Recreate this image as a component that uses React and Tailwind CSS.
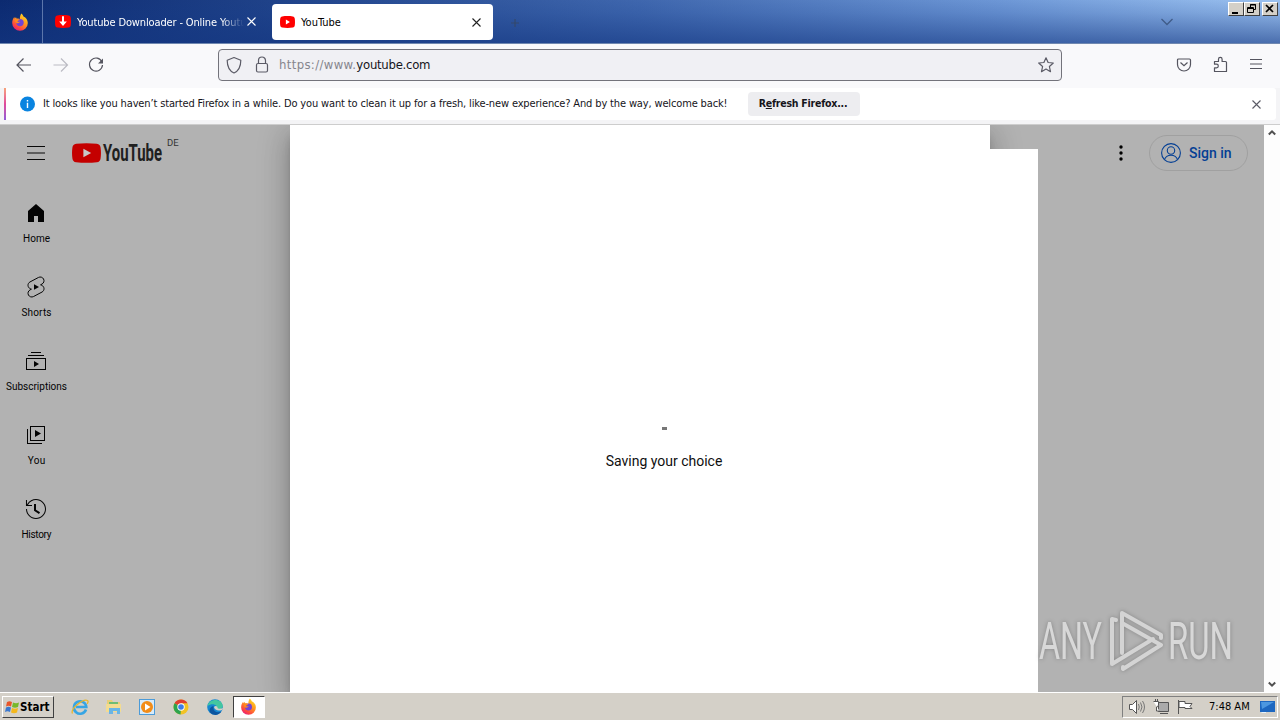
"use client";

const tahoma = "font-['DejaVu_Sans_Condensed','DejaVu_Sans',sans-serif] [font-stretch:75%]";

const sideItems = [
  { label: "Home", w: 27, icon: <path d="M4 10v11h6v-6h4v6h6V10l-8-7z" fill="#030303" /> },
  {
    label: "Shorts",
    w: 30,
    icon: (
      <>
        <path d="M10 14.65v-5.3L15 12z" fill="#030303" />
        <path
          d="M17.77 10.32l-1.2-.5L18 9.06c1.84-.96 2.53-3.23 1.56-5.06s-3.24-2.53-5.07-1.56L6 6.94c-1.29.68-2.07 2.04-2 3.49.07 1.42.93 2.67 2.22 3.25l1.2.5L6 14.93c-1.83.97-2.53 3.24-1.56 5.07.97 1.83 3.24 2.53 5.07 1.56l8.5-4.5c1.29-.68 2.06-2.04 1.99-3.49-.07-1.42-.94-2.68-2.23-3.25z"
          fill="none" stroke="#030303" strokeWidth="1"
        />
      </>
    ),
  },
  {
    label: "Subscriptions",
    w: 61,
    icon: <path d="M10 18v-6l5 3-5 3zm7-15H7v1h10V3zm3 3H4v1h16V6zm2 3H2v12h20V9zM3 10h18v10H3V10z" fill="#030303" />,
  },
  {
    label: "You",
    w: 17.5,
    icon: <path d="m11 7 6 3.500-6 3.500V7zm7 13H4V6H3v15h15v-1zm3-2H6V3h15v15zM7 17h13V4H7v13z" fill="#030303" />,
  },
  {
    label: "History",
    w: 30,
    icon: (
      <path
        d="M14.970 16.950 10 13.870V7h2v5.760l4.030 2.490-1.060 1.700zM22 12c0 5.510-4.490 10-10 10S2 17.510 2 12h1c0 4.960 4.040 9 9 9s9-4.040 9-9-4.040-9-9-9C8.810 3 5.920 4.640 4.280 7.380c-.11.180-.22.370-.31.560L3.940 8H8v1H1.960V3h1v4.740c.040-.090.070-.170.110-.250.110-.220.230-.420.350-.630C5.220 3.860 8.510 2 12 2c5.510 0 10 4.490 10 10z"
        fill="#030303"
      />
    ),
  },
];

function Firefox({ size = 18 }) {
  return (
    <svg width={size} height={size} viewBox="0 0 18 18">
      <defs>
        <linearGradient id="ffx" x1="0.8" y1="0" x2="0.2" y2="1">
          <stop offset="0" stopColor="#ffe226" />
          <stop offset="0.4" stopColor="#ff9a1f" />
          <stop offset="0.75" stopColor="#ff4a3c" />
          <stop offset="1" stopColor="#e31587" />
        </linearGradient>
      </defs>
      <path d="M10.500.5c1 1 1.700 2 2 3 2.500 1.200 4.300 3.500 4.300 6.500a7.800 7.800 0 0 1-15.600 0c0-2.400.8-4.500 2.100-6l.4 1.500 1.300-1.200.8 1.400c1.600-.4 2.500.1 3 .6.100-2.500.5-4.500 1.700-5.800z" fill="url(#ffx)" />
      <circle cx="9" cy="9.600" r="3.700" fill="#7044d6" />
      <path d="M4 6.500c2-1 3.500-.7 5 .5-1.200.2-2.300.8-2.500 1.800 1 .2 1.800 0 2.600-.2-.6 1.600-2.300 2-3.600 1.500-1-.6-1.600-2-1.500-3.600z" fill="#ff8a1e" />
    </svg>
  );
}

function YtBadge({ w, h, color = "#f00", arrow }) {
  return (
    <svg width={w} height={h} viewBox="0 0 28 20" preserveAspectRatio="none">
      <path d="M4 .7C10 0 18 0 24 .7c2.200.3 3.300 1.600 3.600 3.800.5 3.500.5 7.500 0 11-.3 2.200-1.400 3.500-3.600 3.800-6 .7-14 .7-20 0C1.800 19 .7 17.700.4 15.500c-.5-3.500-.5-7.500 0-11C.7 2.300 1.800 1 4 .7z" fill={color} />
      {arrow ? (
        <path d="M12.300 2h3.400v8h5L14 17 7.300 10h5z" fill="#fff" />
      ) : (
        <path d="M11 5.700v8.600l7.500-4.300z" fill={color === "#f00" ? "#fff" : "#c8c8c8"} />
      )}
    </svg>
  );
}

function Cross({ size = 9, color = "#333", className = "" }) {
  return (
    <svg width={size} height={size} viewBox="0 0 9 9" className={className}>
      <path d="M.5.5l8 8M8.500.5l-8 8" stroke={color} strokeWidth="1.100" fill="none" />
    </svg>
  );
}

function TitleBar() {
  return (
    <header className="relative flex h-11 shrink-0 border-b border-[#7088b0] bg-[linear-gradient(90deg,#0c2a70_0%,#20438a_22%,#3f67ae_50%,#6d97d6_78%,#9cc2f0_100%)]">
      <div className="absolute inset-0 bg-[linear-gradient(180deg,rgba(20,60,140,0)_0%,rgba(20,60,140,0.15)_30%,rgba(20,55,130,0.6)_100%)]" />
      <div className="relative flex w-[43px] items-center justify-center border-r border-[#5c76ab] pr-[2px]">
        <Firefox />
      </div>
      <div className="relative flex w-[225px] items-center pl-3">
        <YtBadge w={16} h={13} arrow />
        <div className={`${tahoma} mt-[3px] ml-[6px] w-[167px] overflow-hidden whitespace-nowrap text-[11px] text-white tracking-[-0.14px] [mask-image:linear-gradient(90deg,#000_86%,transparent)]`}>
          Youtube Downloader - Online Youtu
        </div>
        <Cross color="#fff" className="ml-[3px]" />
      </div>
      <div className="relative mt-1 ml-1 flex h-9 w-[221px] items-center rounded-[4px] bg-white pl-2">
        <YtBadge w={15} h={12} />
        <span className={`${tahoma} mt-[2px] ml-[6px] flex-1 text-[11px] text-black`}>YouTube</span>
        <Cross color="#222" className="mr-[12px]" />
      </div>
      <svg className="relative mt-[18px] ml-[17px]" width="10" height="10">
        <path d="M5 1v8M1 5h8" stroke="#34496c" strokeWidth="1.200" />
      </svg>
      <svg className="relative mt-[18px] ml-auto mr-[107px]" width="12" height="8">
        <path d="M.5 1l5.500 5.500L11.500 1" fill="none" stroke="#405c88" strokeWidth="1.300" />
      </svg>
      <WindowButtons />
    </header>
  );
}

function WindowButtons() {
  const btn = "h-[14px] w-4 border border-t-white border-l-white border-r-[#404040] border-b-[#404040] bg-[#d4d0c8]";
  return (
    <div className="absolute top-[2px] right-[2px] flex">
      <div className={btn}>
        <svg width="14" height="12"><path d="M3 9h6v2H3z" /></svg>
      </div>
      <div className={btn}>
        <svg width="14" height="12" fill="none" stroke="#000">
          <path d="M5.500 4V1.500h5v5H9M5 2h6M2.500 4.500h6v5h-6zM2 5.500h7" />
        </svg>
      </div>
      <div className={`${btn} ml-[2px]`}>
        <svg width="14" height="12"><path d="M3 2l7 7M10 2l-7 7" stroke="#000" strokeWidth="1.700" /></svg>
      </div>
    </div>
  );
}

function NavBar() {
  return (
    <nav className="flex h-11 shrink-0 items-center bg-[#f9f9fb] pb-[2px]">
      <svg width="218" height="42" fill="none" stroke="#55555f" strokeWidth="1.200">
        <path d="M31 21H17.500M23.500 14.500L17 21l6.500 6.500" />
        <path d="M53.500 21H67M61 14.500l6.500 6.500-6.500 6.500" stroke="#bbbbc3" />
        <path d="M102 18a6.500 6.500 0 1 0 .5 3" />
        <path d="M98 19.500h5v-5z" fill="#55555f" stroke="none" />
      </svg>
      <div className="flex h-8 w-[844px] items-center rounded-[4px] border border-[#73737b] bg-[#f0f0f4]">
        <svg width="60" height="30" fill="none" stroke="#5b5b66" strokeWidth="1.200">
          <path d="M15 7.500l6.800 2.700c0 6-1.800 10.500-6.800 12.800-5-2.300-6.800-6.800-6.800-12.800z" strokeLinejoin="round" />
          <rect x="37.500" y="13.500" width="11" height="8.500" rx="1.500" />
          <path d="M39.500 13.500v-3a3.500 3.500 0 0 1 7 0v3" />
        </svg>
        <span className={`${tahoma} text-[13px] tracking-[0.35px] text-[#85858d]`}>
          https://www.<span className="tracking-[-0.27px] text-[#15141a]">youtube.com</span>
        </span>
        <svg className="ml-auto mr-[7px]" width="16" height="16" viewBox="0 0 16 16" fill="none" stroke="#5b5b66" strokeWidth="1.200" strokeLinejoin="round">
          <path d="M8 .8l2.100 4.700 5.200.5-3.900 3.500 1.100 5.200L8 12.100l-4.500 2.600 1.100-5.200L.7 6l5.200-.5z" />
        </svg>
      </div>
      <svg className="ml-auto mr-[17px]" width="87" height="20" fill="none" stroke="#55555f" strokeWidth="1.200">
        <path d="M2.500 4h11a1 1 0 0 1 1 1v4.500a6.500 6.500 0 0 1-13 0V5a1 1 0 0 1 1-1z" />
        <path d="M4.500 7.500L8 10.800l3.500-3.300" />
        <path d="M38.500 6.500h4V4.200a1.800 1.800 0 0 1 3.600 0v2.300h3.400a1 1 0 0 1 1 1v9h-12v-3.700h2a1.800 1.800 0 0 0 0-3.600h-2z" strokeLinejoin="round" />
        <path d="M74 4.500h12M74 9h12M74 13.500h12" />
      </svg>
    </nav>
  );
}

function Notification() {
  return (
    <div className="flex h-[37px] shrink-0 flex-col border-b border-[#cdcdcd] bg-[#f4f4f6] pr-1 pl-1">
      <div className="flex h-8 items-center rounded-[3px] bg-white">
        <div className="h-full w-[2px] bg-gradient-to-b from-[#f7a37a] via-[#e0489a] to-[#9059d8]" />
        <svg className="ml-[14px]" width="16" height="16">
          <circle cx="7.500" cy="8" r="7.500" fill="#0a84e0" />
          <path d="M6.800 4h1.400v1.400H6.800zM6.800 6.800h1.400V12H6.800z" fill="#fff" />
        </svg>
        <span className={`${tahoma} ml-[7px] w-[705px] whitespace-nowrap text-[11px] tracking-[-0.146px] text-[#15141a]`}>
          It looks like you haven’t started Firefox in a while. Do you want to clean it up for a fresh, like-new experience? And by the way, welcome back!
        </span>
        <button className={`${tahoma} h-6 w-28 whitespace-nowrap rounded-[4px] bg-[#ededf0] pr-[2px] text-[10.500px] font-bold tracking-[-0.23px] text-[#15141a]`}>
          R<u>e</u>fresh Firefox...
        </button>
        <Cross color="#5b5b66" className="ml-auto mr-[15px]" />
      </div>
    </div>
  );
}

function YouTubePage() {
  return (
    <main className="relative flex h-[567px] shrink-0 overflow-hidden bg-[#b2b2b2]">
      <aside className="flex w-[290px] flex-col">
        <div className="flex h-14 items-center pl-[27px]">
          <svg width="18" height="14"><path d="M0 .5h18M0 7h18M0 13.500h18" stroke="#080808" strokeWidth="1.100" /></svg>
          <div className="ml-[27px]"><YtBadge w={29} h={20} color="#c40000" /></div>
          <svg className="ml-[2px] overflow-visible" width="60" height="26">
            <text x="0" y="21" textLength="59" lengthAdjust="spacingAndGlyphs" fontFamily="Roboto, sans-serif" fontWeight="700" fontSize="23" fill="#202020">YouTube</text>
          </svg>
          <span className="mb-[20px] ml-[4px] font-[Roboto,sans-serif] text-[9.500px] leading-none text-[#333]">DE</span>
        </div>
        <div className="mt-1 flex w-[72px] flex-col">
          {sideItems.map((item) => (
            <div key={item.label} className="flex h-[74px] flex-col items-center pt-4">
              <svg width="24" height="24" viewBox="0 0 24 24">{item.icon}</svg>
              <svg className="mt-[6px]" width="72" height="14">
                <text x={36.500 - item.w / 2} y="11" textLength={item.w} fontFamily="Roboto, sans-serif" fontSize="10" fill="#030303">{item.label}</text>
              </svg>
            </div>
          ))}
        </div>
      </aside>

      <div className="h-full w-[700px] bg-white shadow-[0_16px_24px_2px_rgba(0,0,0,0.14),0_6px_30px_5px_rgba(0,0,0,0.12),0_8px_10px_-5px_rgba(0,0,0,0.4)]" />
      {/* consent overlay is wider than the dialog below it */}
      <div className="absolute top-6 left-[290px] flex h-[543px] w-[748px] flex-col items-center bg-white">
        <div className="mt-[278px] h-[3px] w-[5px] bg-[#777]" />
        <p className="mt-[21px] font-[Roboto,sans-serif] text-[14px] text-[#0f0f0f]">Saving your choice</p>
      </div>

      <div className="ml-auto flex h-14 items-center">
        <svg width="4" height="16"><circle cx="2" cy="2" r="1.700" /><circle cx="2" cy="8" r="1.700" /><circle cx="2" cy="14" r="1.700" /></svg>
        <div className="ml-[26px] mr-4 flex h-9 w-[99px] items-center rounded-full border border-[#a0a0a0] pl-[11px]">
          <svg width="20" height="20" fill="none" stroke="#043f94" strokeWidth="1.100">
            <circle cx="10" cy="10" r="9.400" />
            <circle cx="10" cy="7.500" r="3.700" />
            <path d="M3.500 16.500c1-3 3.500-4.300 6.500-4.300s5.500 1.300 6.500 4.300" />
          </svg>
          <span className="ml-2 font-[Roboto,sans-serif] text-[14px] font-medium text-[#043f94]">Sign in</span>
        </div>
      </div>
      <div className="flex w-4 flex-col items-center justify-between bg-[#fdfdfd] py-[4px]">
        <svg width="8" height="7"><path d="M.8 5.500L4 2.300l3.200 3.200" fill="none" stroke="#505050" strokeWidth="2" /></svg>
        <svg width="8" height="7"><path d="M.8 1.500L4 4.700l3.200-3.200" fill="none" stroke="#505050" strokeWidth="2" /></svg>
      </div>

      <Watermark />
    </main>
  );
}

function Watermark() {
  return (
    <svg className="absolute top-[480px] left-[1036px] overflow-visible drop-shadow-[0_0_2px_rgba(0,0,0,0.25)]" width="200" height="72" fill="#d8d8d8">
      <g fontFamily="Roboto, sans-serif" fontSize="51" fontWeight="400">
        <text x="3" y="54" textLength="63" lengthAdjust="spacingAndGlyphs">ANY</text>
        <text x="132" y="54" textLength="65" lengthAdjust="spacingAndGlyphs">RUN</text>
      </g>
      <g fill="none" stroke="#d4d4d4" strokeWidth="4" strokeLinejoin="round" strokeLinecap="round">
        <path d="M86 48V8l39 22v3M86 18l39 22-38 24v-2" />
        <path d="M80 15l-4-1v45l41-25" />
      </g>
    </svg>
  );
}

function Taskbar() {
  return (
    <footer className="flex h-7 shrink-0 items-center border-t border-white bg-[#d4d0c8] pl-[2px]">
      <div className={`${tahoma} flex h-[22px] w-[52px] items-center border border-t-white border-l-white border-r-[#404040] border-b-[#404040] pl-px text-[11.500px] font-bold text-black`}>
        <svg width="16" height="16">
          <path d="M3 3c2-1 3-1 5 0L7 7.500c-2-1-3-1-5 0z" fill="#e8562a" />
          <path d="M9 3.500c2 1 4 1 6 0l-1 4.500c-2 1-4 1-6 0z" fill="#77b82a" />
          <path d="M2 8.500c2-1 3-1 5 0L6 13c-2-1-3-1-5 0z" fill="#3a78cf" />
          <path d="M8 9c2 1 4 1 6 0l-1 4.500c-2 1-4 1-6 0z" fill="#f4b81c" />
        </svg>
        <span className="mt-[2px]">Start</span>
      </div>
      <div className="ml-[17px] flex items-center gap-[15.700px]">
        <svg width="18" height="18" fill="none">
          <path d="M15 11.500a6.200 6.200 0 1 1 .3-2.500H5" stroke="#36a5e4" strokeWidth="2.600" />
          <path d="M1.500 15.500C-1 11 12 .5 16.500 2.500c1 .6.500 2-.3 3.300" stroke="#e9b62c" strokeWidth="1.300" />
        </svg>
        <svg width="18" height="18">
          <path d="M2 2h5l1 2h7v5H2z" fill="#e8cf78" /><path d="M4 4h9v4H4z" fill="#6fbd72" />
          <path d="M1 6h15v8H1z" fill="#f3dc90" /><path d="M4 10h11v6h-3v-3H8v3H4z" fill="#69b5e5" />
        </svg>
        <svg width="18" height="18">
          <rect x="1.500" y="1.500" width="15" height="15" fill="#d7ebfa" stroke="#4c9bd8" />
          <circle cx="9" cy="9" r="6" fill="#f28c18" /><path d="M7 5.500v7L12.500 9z" fill="#fff" />
        </svg>
        <svg width="18" height="18">
          <circle cx="9" cy="9" r="7.500" fill="#f2c325" />
          <path d="M9 9L2.500 5.250A7.500 7.500 0 0 1 15.500 5.250H9z" fill="#df3f32" />
          <path d="M9 9L2.500 5.250A7.500 7.500 0 0 0 8.500 16.500z" fill="#2da44e" />
          <circle cx="9" cy="9" r="3.700" fill="#fff" /><circle cx="9" cy="9" r="2.800" fill="#3e7de8" />
        </svg>
        <svg width="18" height="18">
          <circle cx="9" cy="9" r="7.800" fill="#1687d0" />
          <path d="M1.500 8C3 0 16 0 16.800 8c0 3-4 4-6 2.500 1.500-3-4-6.500-9.300-2.500z" fill="#43c6a0" />
          <path d="M7.500 8c-1 5 3 7.500 8 5.500-4 6-12 3-12-1 0-2.500 2-4 4-4.500z" fill="#0c559f" />
          <path d="M8 9c.5 3 4 4.500 8 3l1-2c-2 1-5 1-5.500 0 .5-2-2.500-3-3.500-1z" fill="#d4d0c8" />
        </svg>
      </div>
      <div className="ml-[9px] flex h-[22px] w-8 items-center justify-center border border-t-[#404040] border-l-[#404040] border-r-white border-b-white bg-white">
        <Firefox size={17} />
      </div>
      <div className="ml-auto mr-[2px] flex h-[22px] w-[156px] items-center border border-t-[#808080] border-l-[#808080] border-r-white border-b-white">
        <svg width="82" height="20" fill="#fff" stroke="#555">
          <path d="M6.500 7.500h3l4-4v13l-4-4h-3z" />
          <path d="M15.500 7q1.500 3 0 6M17.500 5.500q3 4.500 0 9M19.500 4q4 6 0 12" fill="none" stroke="#777" />
          <path d="M35.500 5.500h10v9h-10zM37 16.500h8" fill="#aaa" />
          <path d="M30.500 4.500h5v4l-2 1.500v4h3M32.500 2v2M34.500 2v2" />
          <path d="M55.500 3v14M56 4.500h6v2h7l-2 3 2 2h-7v-1h-6z" />
        </svg>
        <span className={`${tahoma} mt-[2px] ml-[4px] whitespace-nowrap text-[11px] text-black`}>7:48 AM</span>
        <svg className="ml-auto mr-px" width="16" height="16">
          <path d="M0 2h15v11H0z" fill="#1d67c0" /><path d="M1 3h13L2 10z" fill="#4c97e0" />
          <path d="M2 13h4v1H1z" fill="#e8f3fb" />
        </svg>
      </div>
    </footer>
  );
}

export default function App() {
  return (
    <div className="flex h-[720px] w-[1280px] flex-col overflow-hidden bg-white">
      <TitleBar />
      <NavBar />
      <Notification />
      <YouTubePage />
      <Taskbar />
    </div>
  );
}
